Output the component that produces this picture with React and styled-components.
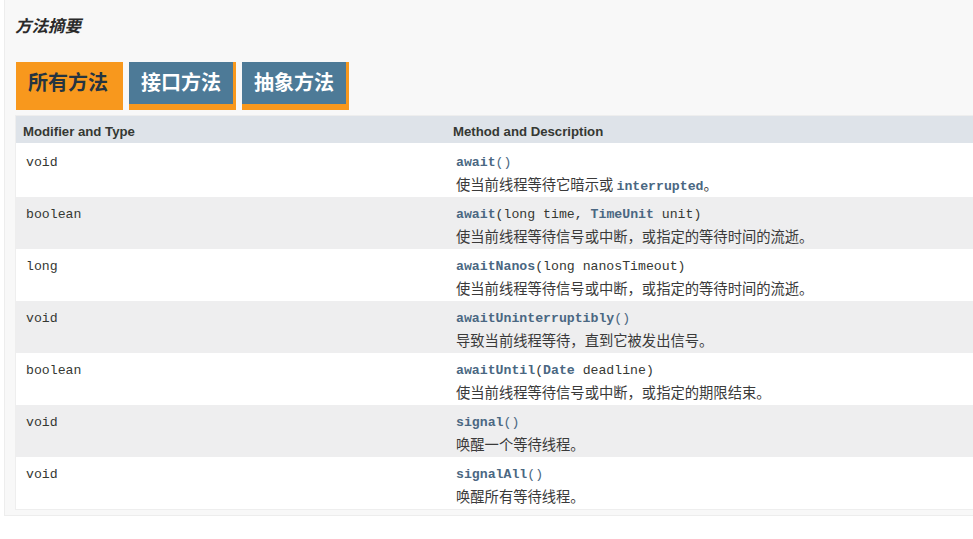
import React from 'react'
import styled, { createGlobalStyle } from 'styled-components'

const GlobalStyle = createGlobalStyle`
    html, body {
        margin: 0;
        padding: 0;
        background: #ffffff;
        overflow: hidden;
    }
    body {
        font-family: "Liberation Sans", Arial, "Noto Sans CJK SC", sans-serif;
    }
`

const Block = styled.div`
    margin-left: 4px;
    width: 1200px;
    background: #f8f8f8;
    border: 1px solid #ededed;
    border-top: none;
    padding: 14px 10px 5px 10px;
`
const Heading = styled.h3`
    margin: 0;
    font-family: "Liberation Sans", "Noto Sans CJK SC", sans-serif;
    font-size: 16.5px;
    line-height: 24px;
    font-style: italic;
    font-weight: bold;
    color: #2a2a2a;
`
const TabRow = styled.div`
    display: flex;
    gap: 6px;
    margin: 24px 0 5px 1px;
`
const Tab = styled.div`
    height: 42px;
    line-height: 42px;
    padding: 0 12px;
    font-family: "Liberation Sans", "Noto Sans CJK SC", sans-serif;
    font-size: 20px;
    font-weight: bold;
    color: ${p => (p.$active ? '#253441' : '#ffffff')};
    background: ${p => (p.$active ? '#f8981d' : '#4d7a97')};
    border-right: 3px solid #f8981d;
    border-bottom: 6px solid #f8981d;
`
const Table = styled.div`
    border: 1px solid #eeeeee;
    background: #ffffff;
`
const HeadRow = styled.div`
    display: grid;
    grid-template-columns: 430px 1fr;
    background: #dee3e9;
    height: 27px;
`
const HeadCell = styled.div`
    padding: 8px 3px 3px 7px;
    font-size: 13.2px;
    line-height: 16px;
    font-weight: bold;
    color: #353833;
`
const Row = styled.div`
    display: grid;
    grid-template-columns: 430px 1fr;
    height: ${p => (p.$first ? '54px' : '52px')};
    box-sizing: border-box;
    padding-top: ${p => (p.$first ? '10px' : '8px')};
    background: ${p => (p.$alt ? '#eeeeef' : '#ffffff')};
`
const Cell = styled.div`
    padding: 0 3px 3px 10px;
`
const Code = styled.div`
    font-family: "Liberation Mono", "Courier New", monospace;
    font-size: 13.2px;
    line-height: 20px;
    color: #353833;
    white-space: pre;
`
const Link = styled.span`
    font-family: "Liberation Mono", "Courier New", monospace;
    font-size: 13.2px;
    font-weight: bold;
    color: #4a6782;
`
const Paren = styled.span`
    color: #4a6782;
`
const Desc = styled.div`
    font-family: "Noto Sans CJK SC", sans-serif;
    font-size: 14.3px;
    line-height: 21px;
    color: #3a3a3a;
`

const methods = [
    { type: 'void', name: 'await', params: null, desc: <>使当前线程等待它暗示或 <Link>interrupted</Link>。</> },
    { type: 'boolean', name: 'await', params: <>long time, <Link>TimeUnit</Link> unit</>, desc: '使当前线程等待信号或中断，或指定的等待时间的流逝。' },
    { type: 'long', name: 'awaitNanos', params: <>long nanosTimeout</>, desc: '使当前线程等待信号或中断，或指定的等待时间的流逝。' },
    { type: 'void', name: 'awaitUninterruptibly', params: null, desc: '导致当前线程等待，直到它被发出信号。' },
    { type: 'boolean', name: 'awaitUntil', params: <><Link>Date</Link> deadline</>, desc: '使当前线程等待信号或中断，或指定的期限结束。' },
    { type: 'void', name: 'signal', params: null, desc: '唤醒一个等待线程。' },
    { type: 'void', name: 'signalAll', params: null, desc: '唤醒所有等待线程。' },
]

const tabs = ['所有方法', '接口方法', '抽象方法']

const App = () => {
    return (
        <>
            <GlobalStyle />
            <Block>
                <Heading>方法摘要</Heading>
                <TabRow>
                    {tabs.map((t, i) => (
                        <Tab key={t} $active={i === 0}>{t}</Tab>
                    ))}
                </TabRow>
                <Table>
                    <HeadRow>
                        <HeadCell>Modifier and Type</HeadCell>
                        <HeadCell>Method and Description</HeadCell>
                    </HeadRow>
                    {methods.map((m, i) => (
                        <Row key={i} $alt={i % 2 === 1} $first={i === 0}>
                            <Cell>
                                <Code>{m.type}</Code>
                            </Cell>
                            <Cell>
                                <Code>
                                    <Link>{m.name}</Link>
                                    {m.params ? <>({m.params})</> : <Paren>()</Paren>}
                                </Code>
                                <Desc>{m.desc}</Desc>
                            </Cell>
                        </Row>
                    ))}
                </Table>
            </Block>
        </>
    )
}

export default App
